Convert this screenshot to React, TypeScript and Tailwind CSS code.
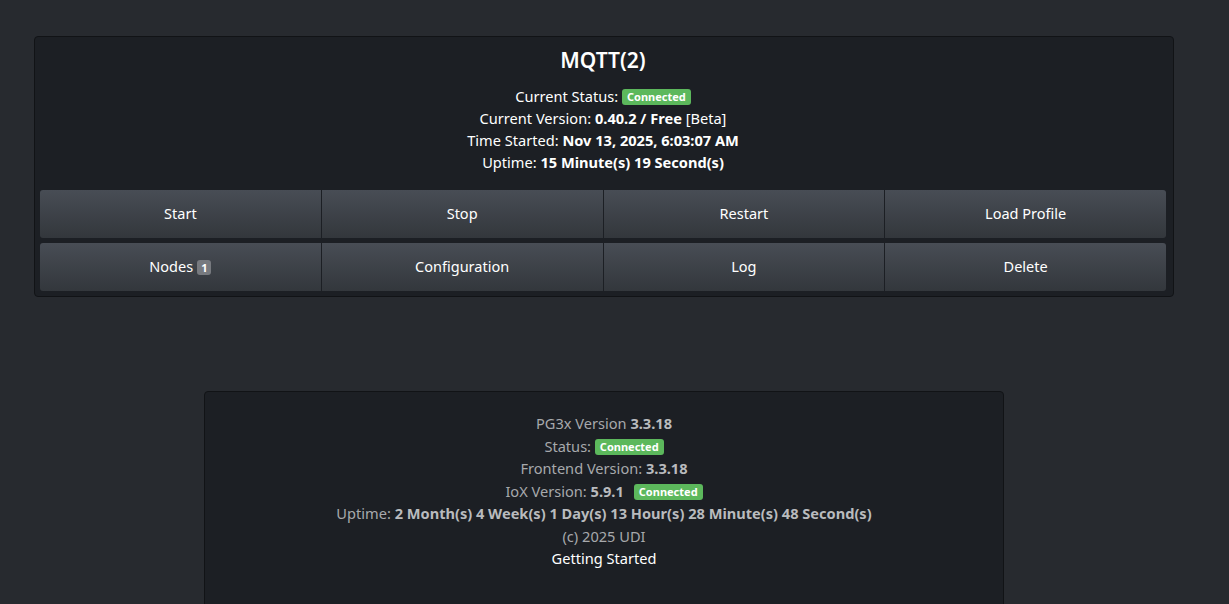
import React from "react";

const Badge = ({ children }: { children: React.ReactNode }) => (
  <span className="inline-block rounded-[3px] bg-[#5cb85c] px-[5px] text-[11px] font-bold leading-[16px] text-white align-[1px]">
    {children}
  </span>
);

const Btn = ({ children, last }: { children: React.ReactNode; last?: boolean }) => (
  <button
    className={`flex h-[48px] flex-1 items-center justify-center bg-gradient-to-b from-[#484d55] to-[#33373c] text-[14.5px] text-white ${
      last ? "" : "border-r border-[#1c1f24]"
    }`}
  >
    {children}
  </button>
);

export default function App() {
  return (
    <div
      className="min-h-screen w-full bg-[#272a2f] text-[14.6px]"
      style={{ fontFamily: '"Noto Sans", "Open Sans", sans-serif' }}
    >
      <div className="w-[1208px] pt-[36px]">
        <div className="mx-auto w-[1140px] rounded-[4px] border border-[#111316] bg-[#1c1f24] pl-[5px] pr-[7px] pb-[5px]">
          <h2 className="pt-[10px] pb-[12px] text-center text-[21px] font-semibold leading-[26px] text-white">
            MQTT(2)
          </h2>
          <div className="flex flex-col items-center leading-[22px] text-white">
            <div>
              Current Status: <Badge>Connected</Badge>
            </div>
            <div>
              Current Version: <b>0.40.2 / Free</b> [Beta]
            </div>
            <div>
              Time Started: <b>Nov 13, 2025, 6:03:07 AM</b>
            </div>
            <div>
              Uptime: <b>15 Minute(s) 19 Second(s)</b>
            </div>
          </div>
          <div className="mt-[17px] flex flex-col gap-[5px]">
            <div className="flex overflow-hidden rounded-[3px]">
              <Btn>Start</Btn>
              <Btn>Stop</Btn>
              <Btn>Restart</Btn>
              <Btn last>Load Profile</Btn>
            </div>
            <div className="flex overflow-hidden rounded-[3px]">
              <Btn>
                Nodes{" "}
                <span className="ml-[4px] inline-block rounded-[3px] bg-[#777a7f] px-[4px] text-[11px] font-bold leading-[15px] text-white">
                  1
                </span>
              </Btn>
              <Btn>Configuration</Btn>
              <Btn>Log</Btn>
              <Btn last>Delete</Btn>
            </div>
          </div>
        </div>

        <div className="mx-auto mt-[94px] h-[240px] w-[800px] rounded-[4px] border border-[#111316] bg-[#1c1f24] pt-[20px]">
          <div className="flex flex-col items-center leading-[22.5px] text-[#a7a9ac]">
            <div>
              PG3x Version <b className="text-[#b9bbbe]">3.3.18</b>
            </div>
            <div>
              Status: <Badge>Connected</Badge>
            </div>
            <div>
              Frontend Version: <b className="text-[#b9bbbe]">3.3.18</b>
            </div>
            <div>
              IoX Version: <b className="text-[#b9bbbe]">5.9.1</b>
              <span className="ml-[10px]">
                <Badge>Connected</Badge>
              </span>
            </div>
            <div>
              Uptime:{" "}
              <b className="text-[#b9bbbe]">
                2 Month(s) 4 Week(s) 1 Day(s) 13 Hour(s) 28 Minute(s) 48 Second(s)
              </b>
            </div>
            <div>(c) 2025 UDI</div>
            <div className="text-white">Getting Started</div>
          </div>
        </div>
      </div>
    </div>
  );
}
